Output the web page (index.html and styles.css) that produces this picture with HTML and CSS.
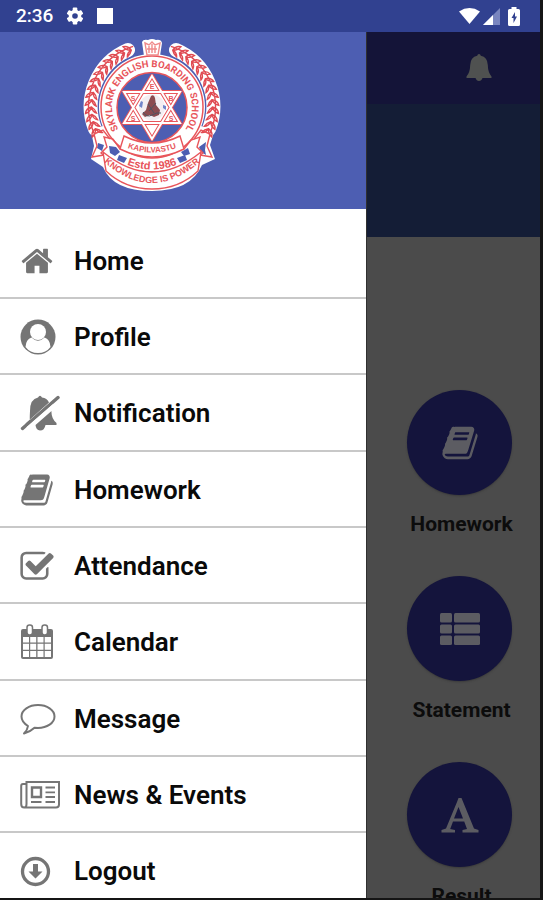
FILE: index.html
```html
<!DOCTYPE html>
<html lang="en">
<head>
<meta charset="utf-8">
<meta name="viewport" content="width=device-width, initial-scale=1">
<title>Skylark English Boarding School</title>
<link rel="stylesheet" href="styles.css">
</head>
<body>
<div class="device">
  <header class="status">
    <div class="status-group">
      <span class="time">2:36</span>
      <svg class="gear" width="18" height="18" viewBox="0 0 18 18" aria-hidden="true"><g fill="#fff"><rect x="6.700" y="0.600" width="4.600" height="16.800" rx="1"/><rect x="6.700" y="0.600" width="4.600" height="16.800" rx="1" transform="rotate(60 9 9)"/><rect x="6.700" y="0.600" width="4.600" height="16.800" rx="1" transform="rotate(120 9 9)"/><circle cx="9" cy="9" r="6.300"/></g><circle cx="9" cy="9" r="2.800" fill="#314190"/></svg>
      <svg width="16" height="16" viewBox="0 0 16 16" aria-hidden="true"><path fill="#fff" d="M0 0h16v16H0z"/></svg>
    </div>
    <div class="status-group status-right">
      <svg width="21" height="16" viewBox="0 0 21 16" aria-hidden="true"><path fill="#fff" d="M0 3.400Q10.500-3.200 21 3.400L10.500 16z"/></svg>
      <svg width="17" height="17" viewBox="0 0 17 17" aria-hidden="true"><path fill="#7985bf" d="M17 0v17H0z"/><path fill="#fff" d="M10 7v10H0z"/></svg>
      <svg class="battery" width="12" height="19" viewBox="0 0 12 19" aria-hidden="true"><path fill="#fff" d="M3.500 0h5v2H10.500Q12 2 12 3.500v14Q12 19 10.500 19h-9Q0 19 0 17.500v-14Q0 2 1.500 2h2z"/><path fill="#314190" d="M7 5L3.500 11H5.500V16L9 9.500H7z"/></svg>
    </div>
  </header>

  <div class="screen">
    <aside class="drawer">
      <div class="brand">
        <svg class="crest" width="138" height="154" viewBox="0 0 138 154" role="img" aria-label="School crest">
          <defs>
            <g id="leaf"><path d="M69 8.500Q64 7 62.500 2.500Q67.500 3 69 8.500Q67 12 63 13.500Q64 9.500 69 8.500" /><path d="M65 5.500h7" /></g>
            <g id="laurel">
              <use href="#leaf" transform="rotate(-20 69 69)"/><use href="#leaf" transform="rotate(-27 69 69)"/><use href="#leaf" transform="rotate(-34 69 69)"/><use href="#leaf" transform="rotate(-41 69 69)"/><use href="#leaf" transform="rotate(-48 69 69)"/><use href="#leaf" transform="rotate(-55 69 69)"/><use href="#leaf" transform="rotate(-62 69 69)"/><use href="#leaf" transform="rotate(-69 69 69)"/><use href="#leaf" transform="rotate(-76 69 69)"/><use href="#leaf" transform="rotate(-83 69 69)"/><use href="#leaf" transform="rotate(-90 69 69)"/><use href="#leaf" transform="rotate(-97 69 69)"/><use href="#leaf" transform="rotate(-104 69 69)"/><use href="#leaf" transform="rotate(-111 69 69)"/>
            </g>
            <path id="ringText" d="M40.700 97.300A40 40 0 1 1 97.300 97.300"/>
            <path id="townText" d="M42 109Q69 120 96 109"/>
            <path id="yearText" d="M38 124Q69 139 100 124"/>
            <path id="mottoText" d="M20 123Q69 167 118 123"/>
          </defs>
          <path fill="none" stroke="#fff" stroke-width="14" stroke-linecap="round" d="M45 12A61.500 61.500 0 0 0 12 91M93 12A61.500 61.500 0 0 1 126 91"/>
          <path fill="#fff" d="M59 4Q60 1 65 2Q69 0 73 2Q78 1 79 5L77 18H61zM8 93L20 88L118 88L131 94L127 107L132 121L119 127Q108 153 69 153Q30 153 20 129L8 121L11 108z"/>
          <circle cx="69" cy="69" r="53" fill="#fff"/>
          <path fill="#4d5eb2" d="M15 105l6 2-2 6-5-3zM26 108l7 1 4 5-5 4-5-3zM36 117l8 3-3 5-7-3zM123 104l-7 5 2 5 5 3-1-5zM105 110l-7 4 3 4 6-2zM102 117l-8 3 3 5 7-3z"/>
          <g fill="none" stroke="#e04a52" stroke-width="1.400"><use href="#laurel"/><use href="#laurel" transform="translate(138 0) scale(-1 1)"/></g>
          <g fill="none" stroke="#e8555b" stroke-width="1.500">
            <circle cx="69" cy="69" r="51"/>
            <circle cx="69" cy="69.500" r="35" fill="#4d5eb2"/>
          </g>
          <path fill="#fff" stroke="#e8555b" stroke-width="4" stroke-linejoin="round" d="M69 38L97 85H41zM69 101L41 54H97z"/>
          <path fill="none" stroke="#fff" stroke-width="2" d="M69 38L97 85H41zM69 101L41 54H97z"/>
          <circle cx="69" cy="69.500" r="13" fill="#f3eef2"/>
          <path fill="#8b4b50" d="M68 58q3-2 4 2l1 7 4 5-1 5-5 2-4-2-5 2-3-3 4-4 2-7z"/>
          <path fill="none" stroke="#4d5361" d="M60 74q4 6 9 3t9-2M65 66l6 9M73 65l-7 8"/>
          <path fill="#7185ca" d="M56 68l2-5 2 1-1 6zM80 67l3 1 0 4-3-2z"/>
          <g class="crest-letters" font-size="7" text-anchor="middle"><text x="69" y="51">E</text><text x="50" y="63">S</text><text x="88" y="63">B</text><text x="50" y="83">S</text><text x="88" y="83">S</text></g>
          <g fill="#fff" stroke="#e8555b" stroke-width="1.400">
            <path d="M41 98Q69 112 97 98L101 111Q69 127 37 111z"/>
            <path d="M37 111L30 101 21 99 24 109 18 115Q40 134 69 134T120 115L114 109 117 99 108 102 101 111" fill="none"/>
            <path d="M11 96L20 92 27 101M127 96L118 92 111 101M11 96L14 108 9 119 21 117M127 96L124 108 129 119 117 117" fill="none"/>
            <path d="M20 114Q69 154 118 114L115 133Q96 151 69 151T23 133z"/>
            <path d="M62 5l4 2 3-3 3 3 5-2-2 12H64zM64 11h10M66 8v7M72 8v7M69 6v9" stroke="#ef8a8a"/>
          </g>
          <g class="crest-letters">
            <text class="ring-text" font-size="9.500"><textPath href="#ringText" startOffset="50%" text-anchor="middle">SKYLARK ENGLISH BOARDING SCHOOL</textPath></text>
            <text font-size="8"><textPath href="#townText" startOffset="50%" text-anchor="middle">KAPILVASTU</textPath></text>
            <text font-size="11"><textPath href="#yearText" startOffset="50%" text-anchor="middle">Estd 1986</textPath></text>
            <text font-size="9"><textPath href="#mottoText" startOffset="50%" text-anchor="middle">KNOWLEDGE IS POWER</textPath></text>
          </g>
        </svg>
      </div>
      <nav>
        <ul class="menu">
          <li><a href="#home"><span class="icon"><svg width="34" height="34" viewBox="0 0 1792 1792"><path d="M1472 992v480q0 26-19 45t-45 19h-384v-384h-256v384h-384q-26 0-45-19t-19-45v-480q0-1 .5-3t.5-3l575-474 575 474q1 2 1 6zm223-69l-62 74q-8 9-21 11h-3q-13 0-21-7l-692-577-692 577q-12 8-24 7-13-2-21-11l-62-74q-8-10-7-23.500t11-21.500l719-599q32-26 76-26t76 26l244 204v-195q0-14 9-23t23-9h192q14 0 23 9t9 23v408l219 182q10 8 11 21.500t-7 23.500z"/></svg></span>Home</a></li>
          <li><a href="#profile"><span class="icon"><svg width="36" height="36" viewBox="0 0 36 36"><circle cx="18" cy="18" r="17.500"/><path fill="#fff" d="M5.500 28Q6 20 11.500 18.500Q18 25 24.500 18.500Q30 20 30.500 28Q26 34 18 34T5.500 28z"/><circle cx="18" cy="13" r="8" fill="#fff"/></svg></span>Profile</a></li>
          <li><a href="#notification"><span class="icon"><svg width="40" height="36" viewBox="0 0 40 36"><path d="M10 27Q9.500 24 10 16Q10 4 18 2.500Q20-1 22 2.500Q27 3 29 7.500L5 29zM31.500 16Q31 23 36.500 28V30H25.500Q24.500 35.500 20 35.500Q16 35 15.500 30z"/><path fill="none" stroke="#757575" stroke-width="3.400" stroke-linecap="round" d="M2.500 33.500L38 2.500"/><path fill="none" stroke="#fff" stroke-width="1.800" d="M7 33L34 9.500"/></svg></span>Notification</a></li>
          <li><a href="#homework"><span class="icon"><svg width="34" height="36" viewBox="0 0 1792 1792" preserveAspectRatio="none"><path id="book" d="M1703 478q40 57 18 129l-275 906q-19 64-76.500 107.500t-122.500 43.500h-923q-77 0-148.500-53.500t-99.500-131.500q-24-67-2-127 0-4 3-27t4-37q1-8-3-21.500t-3-19.500q2-11 8-21t16.500-23.500 16.500-23.500q23-38 45-91.500t30-91.500q3-10 .5-30t-.5-28q3-11 17-28t17-23q21-36 42-92t25-90q1-9-2.500-32t.5-28q4-13 22-30.500t22-22.500q19-26 42.500-84.500t27.500-96.500q1-8-3-25.500t-2-26.500q2-8 9-18t18-23 17-21q8-12 16.500-30.500t15-35 16-36 19.500-32 26.500-23.500 36-11.500 47.500 5.500l-1 3q38-9 51-9h761q74 0 114 56t18 130l-274 906q-36 119-71.500 153.500t-128.500 34.500h-869q-27 0-38 15-11 16-1 43 24 70 144 70h923q29 0 56-15.500t35-41.500l300-987q7-22 5-57 38 15 59 43zm-1064 2q-4 13 2 22.500t20 9.500h608q13 0 25.500-9.500t16.500-22.500l21-64q4-13-2-22.500t-20-9.500h-608q-13 0-25.500 9.500t-16.500 22.500zm-83 256q-4 13 2 22.500t20 9.500h608q13 0 25.500-9.500t16.500-22.500l21-64q4-13-2-22.500t-20-9.500h-608q-13 0-25.500 9.500t-16.500 22.500z"/></svg></span>Homework</a></li>
          <li><a href="#attendance"><span class="icon"><svg width="34" height="30" viewBox="64 96 1664 1500"><path d="M1472 930v318q0 119-84.500 203.500t-203.500 84.500h-832q-119 0-203.500-84.500t-84.500-203.500v-832q0-119 84.500-203.500t203.500-84.500h832q63 0 117 25 15 7 18 23 3 17-9 29l-49 49q-10 10-23 10-3 0-9-2-23-6-45-6h-832q-66 0-113 47t-47 113v832q0 66 47 113t113 47h832q66 0 113-47t47-113v-254q0-13 9-22l64-64q10-10 23-10 6 0 12 3 20 8 20 29zm231-489l-814 814q-24 24-57 24t-57-24l-430-430q-24-24-24-57t24-57l110-110q24-24 57-24t57 24l263 263 647-647q24-24 57-24t57 24l110 110q24 24 24 57t-24 57z"/></svg></span>Attendance</a></li>
          <li><a href="#calendar"><span class="icon"><svg width="34" height="36" viewBox="0 0 34 36"><path d="M3 5h28q2 0 2 2v26q0 2-2 2H3q-2 0-2-2V7q0-2 2-2z"/><path fill="#fff" d="M3 13h6v5.500H3zM10.200 13h6v5.500h-6zM17.500 13h6v5.500h-6zM24.700 13H31v5.500h-6.300zM3 19.800h6v5.900H3zM10.200 19.800h6v5.900h-6zM17.500 19.800h6v5.900h-6zM24.700 19.800H31v5.900h-6.300zM3 27h6v6H3zM10.200 27h6v6h-6zM17.500 27h6v6h-6zM24.700 27H31v6h-6.300z"/><rect x="7" y="1" width="5.500" height="10" rx="2.500" fill="#fff" stroke="#757575" stroke-width="1.500"/><rect x="22" y="1" width="5.500" height="10" rx="2.500" fill="#fff" stroke="#757575" stroke-width="1.500"/></svg></span>Calendar</a></li>
          <li><a href="#message"><span class="icon"><svg width="36" height="32" viewBox="0 0 36 32"><path fill="none" stroke="#757575" stroke-width="2" stroke-linejoin="round" d="M18 2C27 2 34.500 7 34.500 13.500S27 25 18 25L14.500 24.800Q10 29 4 30.500Q7.500 27 8 23Q1.500 19 1.500 13.500C1.500 7 9 2 18 2z"/></svg></span>Message</a></li>
          <li><a href="#news"><span class="icon"><svg width="40" height="30" viewBox="0 0 40 30"><path fill="none" stroke="#757575" stroke-width="2" d="M6.500 4H3Q1.200 4 1.200 6V24Q1.200 27.500 4.200 27.500H36Q39 27.500 39 24.500V2H6.500V24Q6.500 27.500 4.200 27.500"/><path fill="none" stroke="#757575" stroke-width="2.400" d="M12 7.500h9v9.500h-9z"/><path fill="none" stroke="#757575" stroke-width="1.800" d="M25.500 7.500h9.500M25.500 12.300h9.500M25.500 17h9.500M11 22h10.500M25.500 22h9.500"/></svg></span>News &amp; Events</a></li>
          <li><a href="#logout"><span class="icon"><svg width="31" height="31" viewBox="0 0 31 31"><circle cx="15.500" cy="15.500" r="13" fill="none" stroke="#757575" stroke-width="3.300"/><path d="M13 8h5v7.500h4.500L15.500 22.500 8.500 15.500H13z"/></svg></span>Logout</a></li>
        </ul>
      </nav>
    </aside>

    <main class="page">
      <div class="topbar">
        <button class="bell" type="button" aria-label="Notifications"><svg width="26" height="28" viewBox="0 0 26 28"><path fill="#4f5150" d="M13 0Q14.500 0 14.800 1.800Q21.500 3 21.800 11Q22 18.500 25.500 22.500V24H16.500Q15.500 27 13 27T9.500 24H0.500V22.500Q4 18.500 4.200 11Q4.500 3 11.200 1.800Q11.500 0 13 0z"/></svg></button>
      </div>
      <div class="banner"></div>
      <div class="tiles">
        <a class="tile" href="#homework"><span class="disc"><svg width="38" height="38" viewBox="0 0 1792 1792"><use href="#book"/></svg></span><span class="label">Homework</span></a>
        <a class="tile" href="#statement"><span class="disc"><svg width="42" height="34" viewBox="0 0 42 34"><rect x="1" y="1" width="12" height="9.500" rx="1.500"/><rect x="15" y="1" width="26" height="9.500" rx="1.500"/><rect x="1" y="12.500" width="12" height="9" rx="1.500"/><rect x="15" y="12.500" width="26" height="9" rx="1.500"/><rect x="1" y="23.500" width="12" height="9.500" rx="1.500"/><rect x="15" y="23.500" width="26" height="9.500" rx="1.500"/></svg></span><span class="label">Statement</span></a>
        <a class="tile" href="#result"><span class="disc"><svg width="38" height="36" viewBox="0 0 38 36"><path fill-rule="evenodd" d="M17.500 1H20.500L33 31.500L37.500 33V35.500H21.500V33L26 32L23.200 24.500H12L9.200 32L14 33V35.500H0.500V33L5 31.500L16 5zM17.500 10L13 21.500H22z"/></svg></span><span class="label">Result</span></a>
      </div>
    </main>
  </div>
</div>
</body>
</html>
```
FILE: styles.css
```css
* { box-sizing: border-box; }

body {
  margin: 0;
  background: #151515;
  font-family: Roboto, "Liberation Sans", sans-serif;
}

a { color: inherit; text-decoration: none; }
svg { display: block; }

.device {
  display: flex;
  flex-direction: column;
  height: 100vh;
  padding: 0 3px 2px 0;
  overflow: hidden;
}

.status {
  display: flex;
  flex: none;
  align-items: center;
  justify-content: space-between;
  height: 32px;
  padding: 0 20px 0 16px;
  background: #314190;
  color: #fff;
}

.status-group { display: flex; align-items: center; gap: 13px; }
.status-right { gap: 3px; }
.battery { margin-left: 5px; }
.time { font-size: 19px; font-weight: 500; line-height: 32px; }

.screen {
  display: flex;
  flex: 1;
  min-height: 0;
}

.drawer {
  flex: none;
  width: 67.8%;
  overflow: hidden;
  background: #fff;
}

.brand {
  display: flex;
  justify-content: center;
  height: 177px;
  padding: 6px 62px 0 0;
  background: #4d5eb2;
}

.crest-letters {
  fill: #e8555b;
  font-family: "Liberation Sans", sans-serif;
  font-weight: 700;
}

.ring-text { font-family: Roboto, sans-serif; }

.menu {
  margin: 0;
  padding: 14px 0 0;
  list-style: none;
}

.menu li {
  height: 76px;
  border-bottom: 2px solid #c8c8c8;
}

.menu li:nth-child(3n) { height: 77px; }

.menu a {
  display: flex;
  align-items: center;
  height: 100%;
  padding: 1px 0 0 20px;
  color: #0a0a0a;
  font-size: 26px;
  font-weight: 600;
}

.icon { flex: none; width: 54px; fill: #757575; }

.page {
  flex: 1;
  min-width: 0;
  overflow: hidden;
  border-left: 1px solid #303030;
  background: #4b4b4b;
}

.topbar {
  display: flex;
  justify-content: flex-end;
  align-items: center;
  height: 72px;
  padding-right: 48px;
  background: #141438;
}

.bell { padding: 0; border: 0; background: none; }

.banner { height: 133px; background: #141d36; }

.tiles {
  display: flex;
  flex-direction: column;
  align-items: center;
  gap: 39px;
  padding: 153px 0 0 12px;
}

.tile {
  display: flex;
  flex-direction: column;
  align-items: center;
  gap: 16px;
}

.disc {
  display: flex;
  align-items: center;
  justify-content: center;
  width: 105px;
  height: 105px;
  border-radius: 50%;
  background: #14143c;
  box-shadow: 0 1px 2px #3a3a3a;
  fill: #5c5c62;
}

.label {
  padding-left: 4px;
  color: #0c0c0c;
  font-size: 21px;
  font-weight: 700;
  line-height: 26px;
}
```
